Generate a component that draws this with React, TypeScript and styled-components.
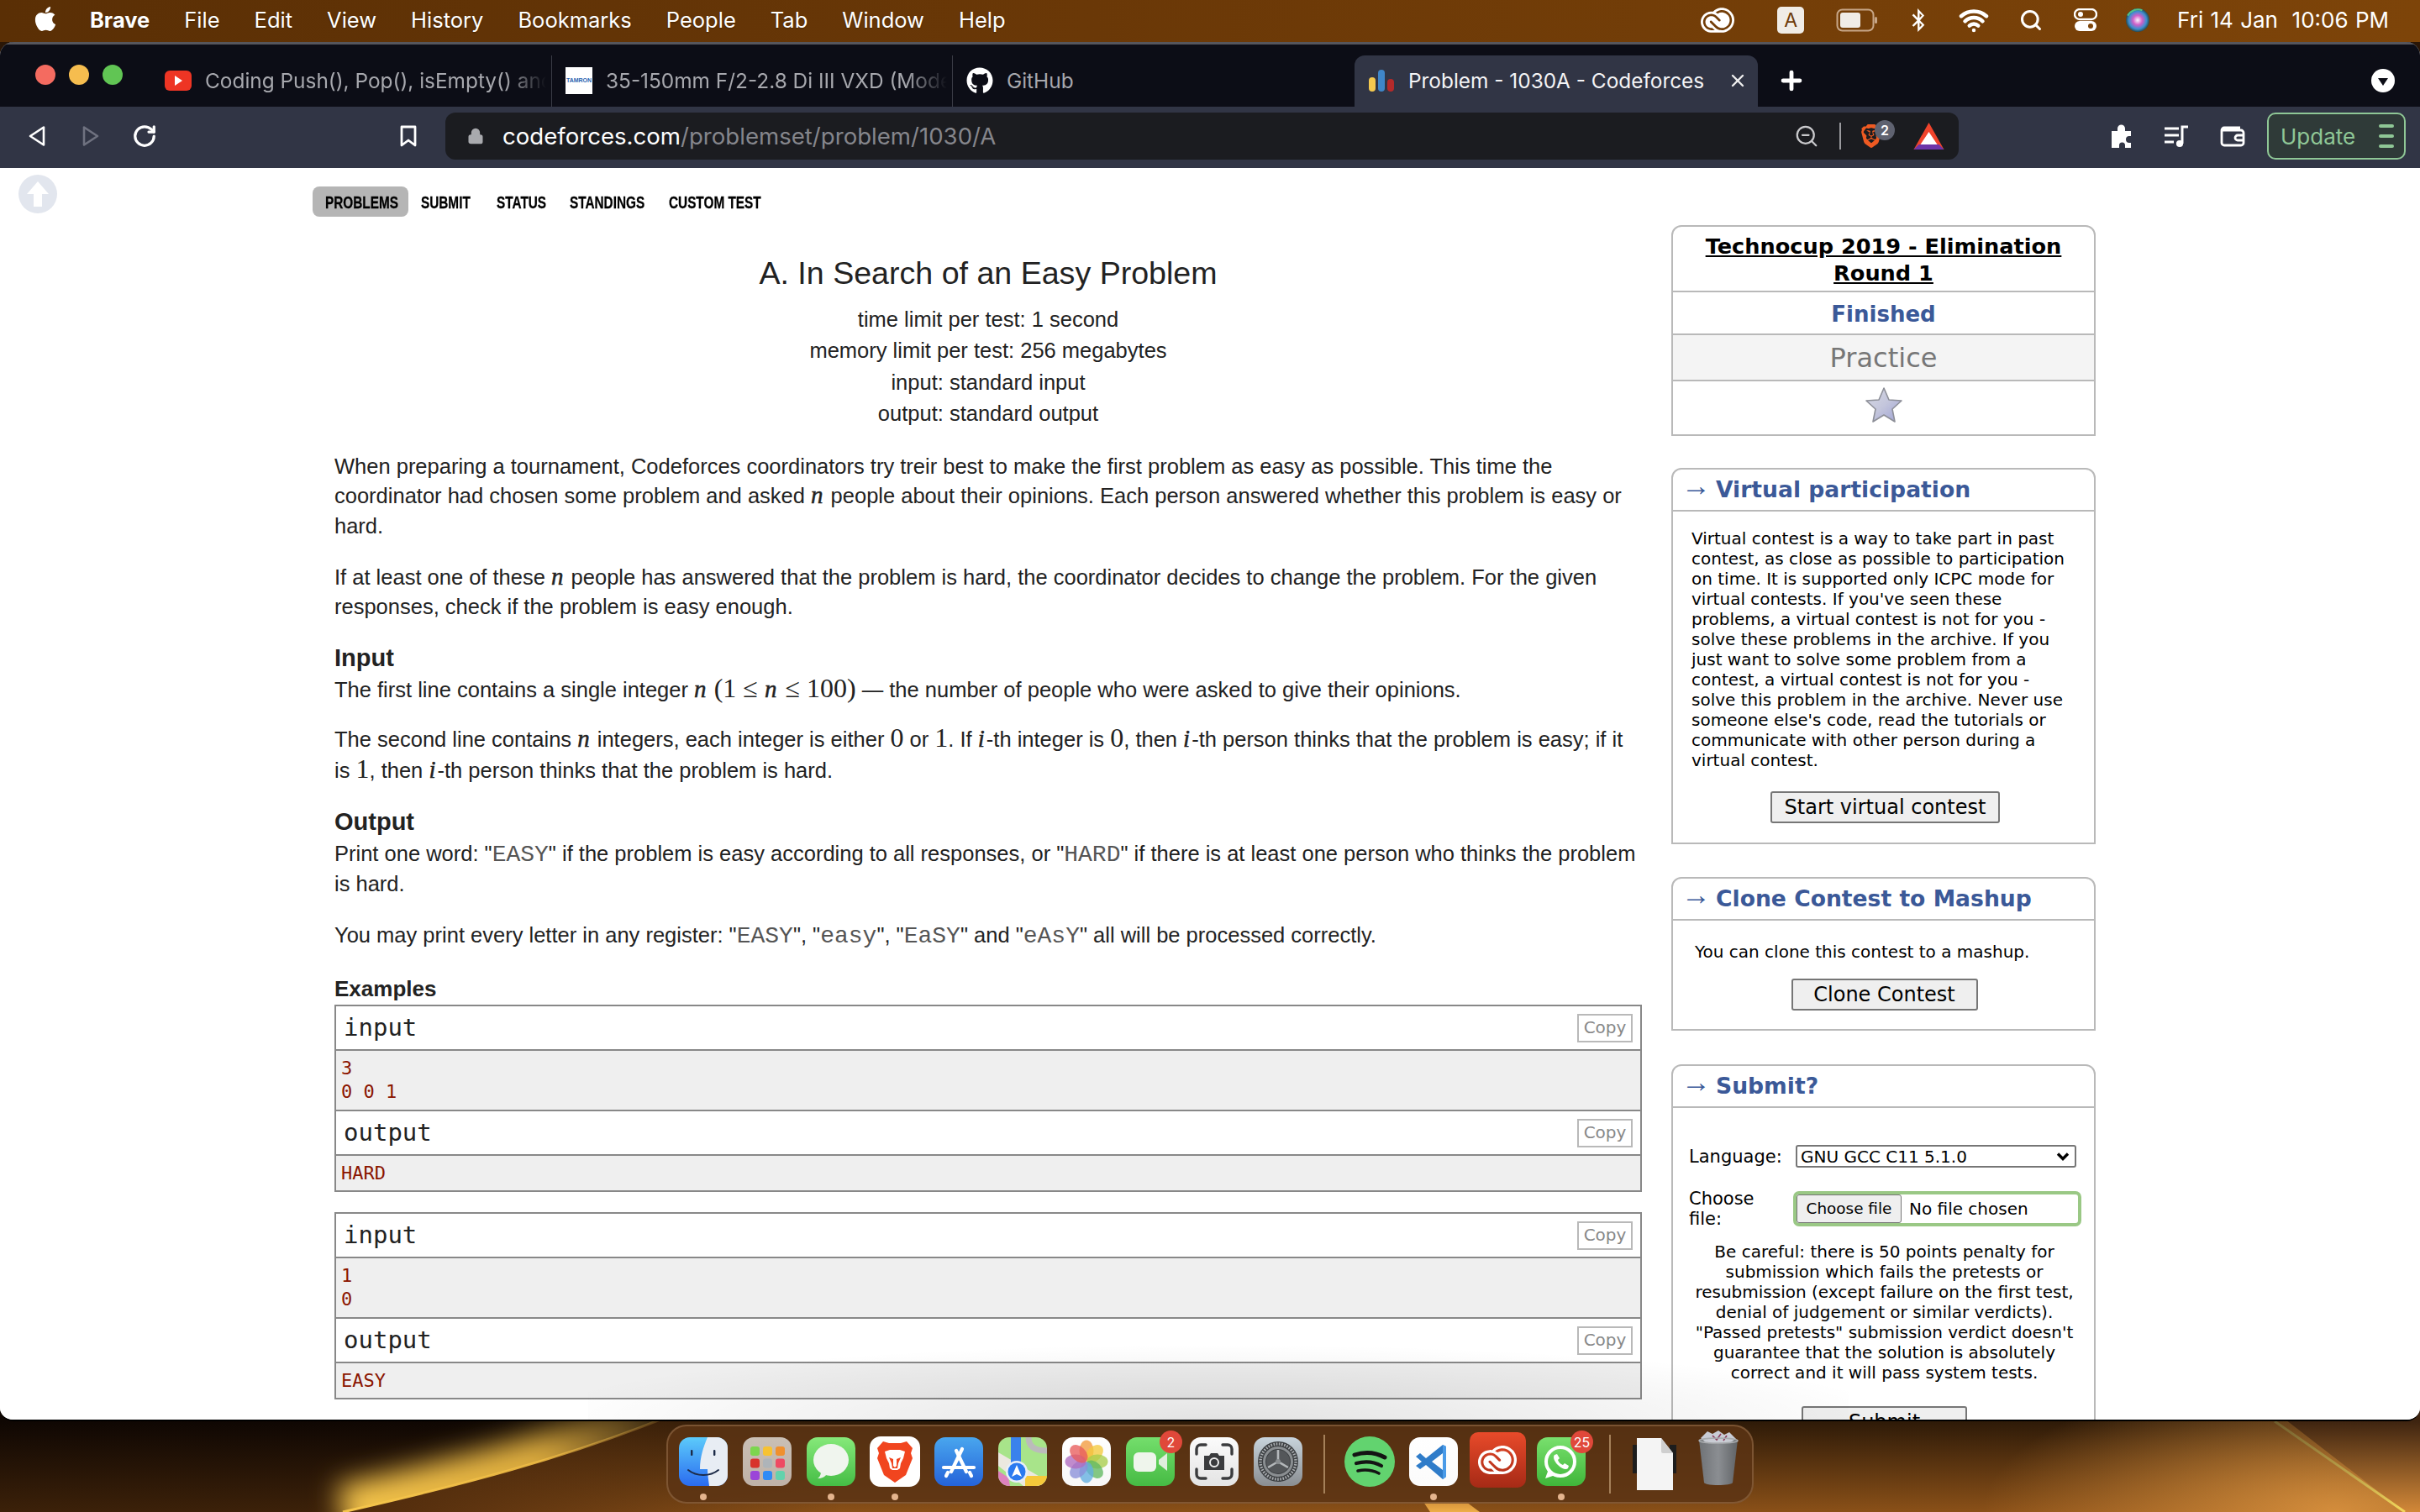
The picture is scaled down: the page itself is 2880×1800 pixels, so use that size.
import React from "react";
import styled, { createGlobalStyle } from "styled-components";
import { FaApple, FaGithub, FaBluetoothB } from "react-icons/fa";
import { SiBrave, SiAdobecreativecloud } from "react-icons/si";
import { Search, Wifi, Plus, X, RotateCw, ZoomOut, Lock } from "lucide-react";

const Global = createGlobalStyle`
  html, body { margin: 0; padding: 0; width: 2880px; height: 1800px; overflow: hidden; background: #3a2008; }
  * { box-sizing: border-box; }
`;

const Screen = styled.div`
  position: relative; width: 2880px; height: 1800px; overflow: hidden;
  display: flex; flex-direction: column; background: #2a1606;
  font-family: Inter, "Liberation Sans", sans-serif;
`;
const Wallpaper = styled.svg`
  position: absolute; left: 0; top: 0; width: 2880px; height: 1800px;
`;
const MenuBar = styled.div`
  position: relative; height: 50px; flex: none; display: flex; align-items: center;
  background: linear-gradient(90deg, #5a2f05 0%, #6a3807 45%, #7d4409 100%);
  color: #fff; font-size: 25.5px; padding: 0 37px 0 41px;
`;
const MenuApple = styled.span`
  display: flex; width: 28px; margin-right: 38px; margin-top: -6px; svg { width: 31px; height: 33px; margin-left: -2px; }
`;
const MenuItem = styled.span<{ $bold?: boolean }>`
  font-weight: ${(p) => (p.$bold ? 700 : 400)};
  margin-right: 41px; margin-top: -4px; white-space: nowrap;
  text-shadow: 0 1px 2px rgba(0, 0, 0, 0.3);
`;
const MenuRight = styled.div`
  margin-left: auto; display: flex; align-items: center; margin-top: -2px;
`;
const Status = styled.span<{ $ml?: number }>`
  display: flex; align-items: center; justify-content: center;
  margin-left: ${(p) => p.$ml ?? 0}px; color: #fff;
`;
const InputBadge = styled.span`
  width: 32px; height: 32px; border-radius: 5px; background: #f0ece6; color: #6e3a08;
  font-size: 23px; display: flex; align-items: center; justify-content: center;
`;
const Clock = styled.span`
  margin-left: 33px; font-size: 26px; white-space: nowrap; word-spacing: 1px; margin-top: -2px;
`;

const Window = styled.div`
  position: relative; height: 1642px; flex: none; display: flex; flex-direction: column;
  border-radius: 16px; overflow: hidden; background: #fff;
  border-bottom: 2px solid #000;
`;
const TabRow = styled.div`
  height: 77px; flex: none; display: flex; align-items: flex-end;
  background: #0c0d16; padding-left: 42px;
  border-top: 3px solid #56565c;
  position: relative;
`;
const Lights = styled.div`
  display: flex; gap: 16px; margin-bottom: 26px; width: 138px; flex: none;
`;
const Light = styled.span<{ $c: string }>`
  width: 24px; height: 24px; border-radius: 50%; background: ${(p) => p.$c};
`;
const Tab = styled.div<{ $active?: boolean; $w: number; $last?: boolean }>`
  width: ${(p) => p.$w}px; height: 61px; flex: none; display: flex; align-items: center;
  padding: 0 0 2px 16px; gap: 16px; position: relative; font-size: 24.4px;
  color: ${(p) => (p.$active ? "#f4f4f6" : "#a7a8ae")};
  background: ${(p) => (p.$active ? "#313545" : "transparent")};
  border-radius: ${(p) => (p.$active ? "12px 12px 0 0" : "0")};
  border-right: ${(p) => (p.$active || p.$last ? "none" : "1px solid #3a3c46")};
`;
const TabTitle = styled.span<{ $fade?: boolean }>`
  white-space: nowrap; overflow: hidden; flex: 1; min-width: 0;
  ${(p) => p.$fade && "-webkit-mask-image: linear-gradient(90deg, #000 88%, transparent 100%); margin-right: 6px;"}
`;
const FavRed = styled.span`
  width: 32px; height: 24px; border-radius: 6px; background: #ee3524; flex: none;
  display: flex; align-items: center; justify-content: center;
  &::after { content: ""; border-left: 9px solid #fff; border-top: 6px solid transparent; border-bottom: 6px solid transparent; }
`;
const FavTamron = styled.span`
  width: 32px; height: 32px; background: #fff; color: #2a62b0; font-size: 7px; font-weight: 700;
  display: flex; align-items: center; justify-content: center; flex: none;
  font-family: "Liberation Sans", sans-serif;
`;
const FavBars = styled.span`
  width: 32px; height: 26px; display: flex; align-items: flex-end; gap: 3px; flex: none;
  padding-left: 1px;
`;
const Bar = styled.i<{ $c: string; $h: number }>`
  width: 8px; height: ${(p) => p.$h}px; background: ${(p) => p.$c}; border-radius: 4px;
`;
const CloseX = styled.span`
  display: flex; margin-right: 12px; color: #eee;
`;
const NewTab = styled.span`
  width: 40px; height: 61px; display: flex; align-items: center; justify-content: center; color: #fff; flex: none;
  margin-left: 20px; padding-bottom: 2px;
`;
const TabMenu = styled.span`
  margin-left: auto; margin-right: 30px; width: 28px; height: 28px; border-radius: 50%; background: #fff;
  align-self: flex-end; margin-bottom: 17px; display: flex; align-items: center; justify-content: center;
  &::after { content: ""; border-top: 9px solid #0c0d16; border-left: 6px solid transparent; border-right: 6px solid transparent; margin-top: 3px; }
`;
const Toolbar = styled.div`
  height: 73px; flex: none; display: flex; align-items: center; background: #313545; padding: 0 17px 3px 30px;
`;
const Tool = styled.span<{ $ml?: number; $w: number; $dim?: boolean }>`
  width: ${(p) => p.$w}px; margin-left: ${(p) => p.$ml ?? 0}px; flex: none;
  display: flex; align-items: center; justify-content: center;
  color: ${(p) => (p.$dim ? "#6f7280" : "#fff")};
`;
const UrlBar = styled.div`
  width: 1801px; height: 56px; margin-left: 32px; border-radius: 12px; background: #1b1c20; flex: none;
  display: flex; align-items: center; padding: 0 17px 0 26px; font-size: 27.6px; color: #fff;
`;
const UrlPath = styled.span` color: #85868c; `;
const UrlLock = styled.span`
  display: flex; width: 42px; color: #a9aaae;
`;
const UrlRight = styled.div`
  margin-left: auto; display: flex; align-items: center; color: #c9c9cc;
`;
const UrlDivider = styled.span`
  width: 2px; height: 32px; background: #9a9a9e; margin: 0 22px 0 24px;
`;
const ShieldWrap = styled.span`
  position: relative; display: flex; width: 28px; color: #ee5a22; margin-right: 36px;
`;
const ShieldBadge = styled.span`
  position: absolute; left: 18px; top: -4px; width: 24px; height: 24px; border-radius: 50%; background: #5f6270; color: #fff;
  font-size: 16px; font-weight: 600; display: flex; align-items: center; justify-content: center;
`;
const UpdateBtn = styled.div`
  width: 165px; height: 56px; margin-left: 25px; border: 2px solid #8fc796; border-radius: 10px; flex: none;
  background: #2f3a38; color: #8fc796; font-size: 26px; display: flex; align-items: center; justify-content: space-between;
  padding: 0 12px 0 14px;
`;
const UpdateLines = styled.span`
  width: 18px; display: flex; flex-direction: column; gap: 8px;
  i { display: block; height: 4px; border-radius: 2px; background: #8fc796; }
`;

const Page = styled.div`
  position: relative; flex: 1; min-height: 0; overflow: hidden; background: #fff; color: #222;
  font-family: "Liberation Sans", Arial, sans-serif;
`;
const ToTop = styled.span`
  position: absolute; left: 22px; top: 8px; width: 46px; height: 46px; border-radius: 50%; background: #e2e6ee;
  display: flex; align-items: center; justify-content: center;
`;
const DockShade = styled.div`
  position: absolute; left: 700px; width: 1500px; bottom: 0; height: 90px; pointer-events: none;
  background: radial-gradient(ellipse 55% 100% at 50% 100%, rgba(0,0,0,.11), rgba(0,0,0,0) 100%);
`;
const Nav = styled.nav`
  display: flex; align-items: center; height: 36px; margin: 22px 0 0 372px;
  font-family: "Liberation Sans", sans-serif; font-weight: 700; font-size: 21px; color: #000;
  -webkit-text-stroke: 0.3px #000;
`;
const NavItem = styled.span<{ $active?: boolean; $w: number }>`
  width: ${(p) => p.$w}px; height: 36px; display: flex; align-items: center; padding: 2px 0 0 15px; white-space: nowrap;
  border-radius: ${(p) => (p.$active ? "8px" : "0")};
  background: ${(p) => (p.$active ? "#b5b5b5" : "transparent")};
`;
const NavLabel = styled.span`
  display: inline-block; transform: scaleX(0.73); transform-origin: left center;
`;
const Columns = styled.div`
  display: grid; grid-template-columns: 1556px 505px; column-gap: 35px; margin: 10px 0 0 398px; width: 2100px;
`;
const Main = styled.main`
  font-size: 25.5px; line-height: 35.7px; min-width: 0;
`;
const Title = styled.h1`
  margin: 32px 0 0; font-size: 37.6px; line-height: 50px; font-weight: 400; text-align: center; color: #222;
`;
const Limits = styled.div`
  margin-top: 12px; text-align: center; line-height: 37.4px;
`;
const Para = styled.p<{ $mt?: number }>`
  margin: ${(p) => p.$mt ?? 25}px 0 0;
`;
const SectionTitle = styled.h2<{ $mt?: number; $small?: boolean }>`
  margin: ${(p) => p.$mt ?? 24}px 0 0; font-size: ${(p) => (p.$small ? 26 : 29)}px; line-height: ${(p) => (p.$small ? 30 : 36)}px; font-weight: 700;
`;
const V = styled.span`
  font-family: "Liberation Serif", serif; font-style: italic; font-size: 29px; line-height: 1; margin-right: 2px;
  -webkit-text-stroke: 0.5px currentColor;
`;
const N = styled.span`
  font-family: "Liberation Serif", serif; font-size: 32px; line-height: 1;
`;
const Tt = styled.code`
  font-family: "Liberation Mono", monospace; font-size: 28px; line-height: 1; color: #555;
`;
const Sample = styled.section<{ $mt: number }>`
  border: 2px solid #888; margin-top: ${(p) => p.$mt}px; font-family: "DejaVu Sans Mono", monospace;
`;
const SampleHead = styled.div`
  height: 53px; display: flex; align-items: center; justify-content: space-between; padding: 0 9px 0 9px;
  font-size: 29px; color: #222; border-bottom: 2px solid #888;
`;
const Copy = styled.span`
  width: 66px; height: 34px; border: 2px solid #b9b9b9; color: #888; font-family: "DejaVu Sans", sans-serif; font-size: 20px;
  display: flex; align-items: center; justify-content: center;
`;
const SampleBody = styled.pre<{ $last?: boolean; $h: number }>`
  margin: 0; height: ${(p) => p.$h}px; padding: 7px 0 0 6px; background: #efefef; color: #8b1500; font-family: inherit;
  font-size: 22px; line-height: 28px; border-bottom: ${(p) => (p.$last ? "none" : "2px solid #888")};
`;

const Side = styled.aside`
  font-family: "DejaVu Sans", Verdana, sans-serif; color: #000; font-size: 20px; line-height: 24px;
`;
const Box = styled.section<{ $mt?: number }>`
  border: 2px solid #b9b9b9; border-radius: 12px 12px 0 0; margin-top: ${(p) => p.$mt ?? 0}px;
`;
const ContestName = styled.a`
  display: block; height: 78px; padding-top: 7px; text-align: center; font-size: 25.6px; line-height: 32px; font-weight: 700; color: #000;
  text-decoration: underline; border-bottom: 2px solid #b9b9b9;
`;
const Finished = styled.div`
  height: 51px; padding-top: 2px; display: flex; align-items: center; justify-content: center; color: #3b5998; font-weight: 700; font-size: 26px;
  border-bottom: 2px solid #b9b9b9;
`;
const Practice = styled.div`
  height: 55px; display: flex; align-items: center; justify-content: center; background: #f4f4f4; color: #777; font-size: 32px;
  border-bottom: 2px solid #b9b9b9;
`;
const StarRow = styled.div`
  height: 63px; display: flex; align-items: flex-start; justify-content: center; padding-top: 6px;
`;
const BoxHead = styled.h3`
  margin: 0; height: 50px; display: flex; align-items: center; color: #3b5998; font-size: 26.6px; font-weight: 700; padding-left: 15px;
  border-bottom: 2px solid #b9b9b9;
`;
const Arrow = styled.span`
  font-family: "Liberation Serif", serif; font-weight: 400; font-size: 35px; flex: none; margin: -9px 0 0 -5px; padding-right: 5px; box-sizing: content-box; width: 36px;
`;
const BoxBody = styled.div<{ $pt: number; $pb: number; $pl?: number }>`
  padding: ${(p) => p.$pt}px 20px ${(p) => p.$pb}px ${(p) => p.$pl ?? 22}px;
`;
const NormalBtn = styled.button<{ $w: number; $mt: number; $left: number }>`
  display: block; width: ${(p) => p.$w}px; height: 38px; margin: ${(p) => p.$mt}px auto 0; position: relative; left: ${(p) => p.$left}px; border: 2px solid #767676; border-radius: 3px;
  background: #efefef; color: #000; font: 24px "DejaVu Sans", sans-serif; padding: 0;
`;
const FormRow = styled.div<{ $mt?: number }>`
  display: grid; grid-template-columns: 125px 1fr; align-items: center; margin: ${(p) => p.$mt ?? 0}px 0 0 -3px; font-size: 21px;
`;
const LangSelect = styled.div`
  width: 334px; height: 27px; border: 2px solid #767676; border-radius: 3px; background: #fff; font-size: 20px; padding: 0 6px 0 4px; margin-left: 2px;
  display: flex; align-items: center; justify-content: space-between; color: #000;
`;
const FileBox = styled.div`
  width: 343px; height: 42px; margin-left: -1px; border: 4px solid #9ac885; border-radius: 7px; display: flex; align-items: center;
`;
const FileBtn = styled.span`
  width: 125px; height: 34px; border: 1.5px solid #767676; border-radius: 3px; background: #efefef; font-size: 18.4px; display: flex; align-items: center; justify-content: center; flex: none;
`;
const FileName = styled.span` margin-left: 9px; font-size: 20px; `;
const Warn = styled.p`
  margin: 15px -6px 0 -6px; text-align: center; padding: 0;
`;
const SubmitBtn = styled.button`
  display: block; width: 197px; height: 38px; margin: 28px auto 0; position: relative; left: 0; border: 2px solid #767676; border-radius: 3px; background: #efefef; font: 24px "DejaVu Sans", sans-serif; color: #000; padding: 0;
`;

const Dock = styled.div`
  position: absolute; left: 793px; top: 1696px; width: 1294px; height: 94px; display: flex; align-items: flex-start;
  padding: 13px 0 0 4px; border-radius: 24px; border: 2px solid rgba(190, 150, 110, 0.35);
  background: rgba(92, 52, 20, 0.85);
`;
const Slot = styled.div`
  width: 76px; flex: none; display: flex; flex-direction: column; align-items: center;
`;
const IconHolder = styled.div`
  position: relative; width: 58px; height: 58px; display: flex; align-items: center; justify-content: center;
  > svg { display: block; flex: none; }
`;
const Dot = styled.span<{ $on?: boolean }>`
  width: 8px; height: 8px; border-radius: 50%; margin-top: 9px; background: ${(p) => (p.$on ? "#e4b48e" : "transparent")};
`;
const Badge = styled.span`
  position: absolute; right: -9px; top: -8px; width: 27px; height: 27px; border-radius: 50%; background: #e0483a; color: #fff;
  font-size: 16px; display: flex; align-items: center; justify-content: center;
`;
const DockSep = styled.span<{ $ml: number; $mr: number }>`
  width: 2px; height: 70px; margin: -3px ${(p) => p.$mr}px 0 ${(p) => p.$ml}px; background: #a5815a; flex: none;
`;
const CcTile = styled.span`
  flex: none; width: 67px; height: 66px; margin-top: -4px; border-radius: 10px; color: #fff;
  background: linear-gradient(180deg, #e84a2a, #a62a16);
  display: flex; align-items: center; justify-content: center;
`;

const Sq: React.FC<{ id: string; a: string; b: string; children?: React.ReactNode }> = ({ id, a, b, children }) => (
  <svg width="58" height="58" viewBox="0 0 58 58">
    <defs>
      <linearGradient id={id} x1="0" y1="0" x2="0" y2="1">
        <stop offset="0" stopColor={a} />
        <stop offset="1" stopColor={b} />
      </linearGradient>
    </defs>
    <rect width="58" height="58" rx="13" fill={`url(#${id})`} />
    {children}
  </svg>
);

const Finder = () => (
  <Sq id="fi" a="#5ccbfb" b="#2a6bf0">
    <path d="M34 0H45a13 13 0 0 1 13 13V45a13 13 0 0 1-13 13H36c-1-8-2-14-2-20H25c0-14 4-26 9-38z" fill="#e8edf4" />
    <rect x="14" y="15" width="2.4" height="7" rx="1" fill="#1d2b48" />
    <rect x="41" y="15" width="2.4" height="7" rx="1" fill="#1d2b48" />
    <path d="M11 39c10 8 26 8 36 0" stroke="#1d2b48" strokeWidth="2" fill="none" strokeLinecap="round" />
  </Sq>
);
const Launchpad = () => {
  const cs = ["#7cd64f", "#f7c232", "#f0902e", "#d8332c", "#aeb4b9", "#ee4a63", "#9b45d8", "#2f8bf5", "#63d2ac"];
  return (
    <Sq id="lp" a="#c9bfb5" b="#bfb2a8">
      {cs.map((c, i) => (
        <rect key={c} x={9 + (i % 3) * 15} y={11 + Math.floor(i / 3) * 14.5} width="11" height="11" rx="3" fill={c} />
      ))}
    </Sq>
  );
};
const Messages = () => (
  <Sq id="ms" a="#86e97a" b="#45bd45">
    <ellipse cx="29" cy="27" rx="21" ry="19" fill="#f0f5ee" />
    <path d="M17 41c0 4-2 7-4 8 5 0 9-2 11-5z" fill="#eef4ec" />
  </Sq>
);
const BraveIcon = () => (
  <svg width="60" height="60" viewBox="0 0 60 60">
    <rect width="60" height="60" rx="13" fill="#fff" />
    <path d="M16 6l7 2h14l7-2 7 8-2 6 2 6-8 20-13 9-13-9-8-20 2-6-2-6z" fill="#f1451f" />
    <path d="M18 18l6-2h12l6 2-2 8-3 6-1 6-6 4-6-4-1-6-3-6z" fill="#fff" />
    <path d="M23 25l5 2v8l2 2 2-2v-8l5-2-3 7-1 6h-6l-1-6z" fill="#f1451f" />
    <path d="M26 40h8l-4 4z" fill="#f1451f" />
  </svg>
);
const AppStore = () => (
  <Sq id="as" a="#49a6ee" b="#2563d9">
    <g stroke="#fff" strokeWidth="4.2" strokeLinecap="round">
      <path d="M20 41L33 14" />
      <path d="M38 41L26 16" />
      <path d="M11 36h36" />
      <path d="M16 42l-2 4" />
      <path d="M42 42l2 4" />
    </g>
  </Sq>
);
const Maps = () => (
  <svg width="58" height="58" viewBox="0 0 58 58">
    <clipPath id="mc"><rect width="58" height="58" rx="13" /></clipPath>
    <g clipPath="url(#mc)">
      <rect width="58" height="58" fill="#a8e48a" />
      <path d="M0 18L58 52V58H30L0 34z" fill="#ece8df" />
      <path d="M0 40V58H14L12 48z" fill="#dd82be" />
      <path d="M32 58V46H58V58z" fill="#f6c93a" />
      <rect x="15" y="0" width="12" height="36" fill="#3a82ec" />
      <path d="M36 0c0 10 6 16 22 16" stroke="#bbb" strokeWidth="7" fill="none" />
      <circle cx="22" cy="41" r="13" fill="#e8eef8" />
      <circle cx="22" cy="41" r="10.5" fill="#2b7af0" />
      <path d="M22 33l6 14-6-3-6 3z" fill="#fff" />
    </g>
  </svg>
);
const Photos = () => {
  const cs = ["#f29a3e", "#f3c93e", "#a9cd4b", "#62b862", "#62aee0", "#8b8fd8", "#b06bc0", "#e85c5c"];
  return (
    <Sq id="ph" a="#ffffff" b="#f7f7f7">
      {cs.map((c, i) => (
        <ellipse key={c} cx="29" cy="16" rx="8.5" ry="12.5" fill={c} opacity="0.78" transform={`rotate(${i * 45} 29 29)`} />
      ))}
    </Sq>
  );
};
const FaceTime = () => (
  <Sq id="ft" a="#74de6c" b="#46bb44">
    <rect x="9" y="18" width="27" height="23" rx="6" fill="#eff5ec" />
    <path d="M39 27l10-8v21l-10-8z" fill="#e0eedd" />
  </Sq>
);
const Screenshot = () => (
  <Sq id="ss" a="#fbfbfb" b="#e4e4e4">
    <g stroke="#3b3c3e" strokeWidth="3.4" fill="none" strokeLinecap="round">
      <path d="M8 20v-6a5 5 0 0 1 5-5h6" />
      <path d="M50 20v-6a5 5 0 0 0-5-5h-6" />
      <path d="M8 38v6a5 5 0 0 0 5 5h6" />
      <path d="M50 38v6a5 5 0 0 1-5 5h-6" />
    </g>
    <path d="M17 22h6l2-3h8l2 3h6v17H17z" fill="#3b3c3e" />
    <circle cx="29" cy="30" r="5" fill="none" stroke="#eee" strokeWidth="2" />
  </Sq>
);
const Settings = () => (
  <Sq id="st" a="#c8d4dc" b="#8a8e92">
    <circle cx="29" cy="29" r="24" fill="#3c3f42" />
    <circle cx="29" cy="29" r="21" fill="none" stroke="#a8acaf" strokeWidth="3.4" strokeDasharray="1.6 1.6" />
    <circle cx="29" cy="29" r="16.5" fill="none" stroke="#8a8e91" strokeWidth="3" />
    <circle cx="29" cy="29" r="14" fill="#54575a" />
    <g stroke="#b4b8bb" strokeWidth="2.6">
      <path d="M29 29V15" />
      <path d="M29 29L17 36" />
      <path d="M29 29L41 36" />
    </g>
    <circle cx="29" cy="29" r="3" fill="#8a8e91" />
  </Sq>
);
const Spotify = () => (
  <svg width="60" height="60" viewBox="0 0 60 60">
    <circle cx="30" cy="30" r="30" fill="#62d36f" />
    <g stroke="#141414" fill="none" strokeLinecap="round">
      <path d="M12 22c12-4 25-3 36 3" strokeWidth="5" />
      <path d="M14 32c11-3 21-2 30 3" strokeWidth="4.2" />
      <path d="M16 41c9-2 17-1 25 3" strokeWidth="3.6" />
    </g>
  </svg>
);
const VSCode = () => (
  <Sq id="vs" a="#fff" b="#fbfbfb">
    <path d="M40 9L44 11 V47 L40 50 L20 33 L13 38 L8 34 L15 29 L8 23 L13 19 L20 25z M40 19L27 29l13 10z" fill="#2f7cc9" fillRule="evenodd" />
    <path d="M40 9L44 11V47L40 50z" fill="#4a9be8" />
  </Sq>
);
const CreativeCloud = () => (
  <CcTile><SiAdobecreativecloud size={46} /></CcTile>
);
const WhatsApp = () => (
  <Sq id="wa" a="#79e06e" b="#40b63a">
    <circle cx="28" cy="29" r="17" fill="none" stroke="#fff" strokeWidth="4" />
    <path d="M14 38l-4 11 12-4z" fill="#fff" />
    <path d="M21 21c-2 2-1 7 4 12s10 6 12 4l1-3-5-3-2 2c-3-1-5-3-6-6l2-2-3-5z" fill="#fff" />
  </Sq>
);
const Doc = () => (
  <svg width="52" height="62" viewBox="0 0 52 62" style={{ marginTop: 6 }}>
    <rect x="0" y="8" width="6" height="34" fill="#1d1d1d" />
    <rect x="44" y="8" width="8" height="34" fill="#1d1d1d" />
    <path d="M5 0H34L48 18V62H5z" fill="#f4f4f4" />
    <path d="M34 0L48 18H36a2 2 0 0 1-2-2z" fill="#cfcfcf" />
  </svg>
);
const Trash = () => (
  <svg width="52" height="68" viewBox="0 0 52 68" style={{ marginTop: -7 }}>
    <defs>
      <linearGradient id="tr" x1="0" y1="0" x2="1" y2="0">
        <stop offset="0" stopColor="#6f7276" />
        <stop offset="0.5" stopColor="#8b8e92" />
        <stop offset="1" stopColor="#606366" />
      </linearGradient>
    </defs>
    <path d="M3 11L9 62c1 4 33 4 34 0l6-51z" fill="url(#tr)" />
    <path d="M5 9l8-8 6 3 7-4 7 5 6-3 8 8-8 5H12z" fill="#c9ccd4" />
    <path d="M19 6l5 5 5-7M36 6l-4 6" stroke="#8a3a5a" strokeWidth="1.6" fill="none" />
    <ellipse cx="26" cy="12" rx="23" ry="3" fill="none" stroke="#a9acaf" strokeWidth="1.6" />
  </svg>
);

const BackIcon: React.FC<{ flip?: boolean }> = ({ flip }) => (
  <svg width="22" height="26" viewBox="0 0 22 26" style={flip ? { transform: "scaleX(-1)" } : undefined}>
    <path d="M19 2.5v21L3 13z" fill="none" stroke="currentColor" strokeWidth="2.6" strokeLinejoin="round" />
  </svg>
);
const Bookmark = () => (
  <svg width="22" height="26" viewBox="0 0 22 26">
    <path d="M3 2h16v22l-8-6-8 6z" fill="none" stroke="currentColor" strokeWidth="2.8" strokeLinejoin="round" />
  </svg>
);
const Triangle = () => (
  <svg width="37" height="32" viewBox="0 0 36 32">
    <path d="M18 0L36 32H0z" fill="#f0442c" />
    <path d="M6 26L0 32H36L30 26z" fill="#6d35a8" />
    <path d="M18 11L28 26H8z" fill="#fff" />
  </svg>
);
const Puzzle = () => (
  <svg width="30" height="30" viewBox="0 0 30 30">
    <path d="M2 9h7V6a4.5 4.5 0 0 1 9 0v3h7v6h-2a4 4 0 0 0 0 8h2v6H18v-3a3.5 3.5 0 0 0-7 0v3H2z" fill="currentColor" />
  </svg>
);
const Playlist = () => (
  <svg width="30" height="28" viewBox="0 0 30 28" fill="none" stroke="currentColor" strokeWidth="3">
    <path d="M1 5h17M1 13h17M1 21h11" />
    <path d="M22 23V3h7" />
    <circle cx="19" cy="23" r="2.6" fill="currentColor" />
  </svg>
);
const Wallet = () => (
  <svg width="30" height="28" viewBox="0 0 30 28" fill="none" stroke="currentColor" strokeWidth="2.8">
    <path d="M24 4H5a3 3 0 0 0-3 3v15a3 3 0 0 0 3 3h20a3 3 0 0 0 3-3V10a3 3 0 0 0-3-3H3" />
    <path d="M28 13h-7a3 3 0 0 0 0 6h7" />
  </svg>
);
const Battery = () => (
  <svg width="50" height="28" viewBox="0 0 50 28">
    <rect x="1.5" y="1.5" width="43" height="25" rx="6" fill="none" stroke="#c7a687" strokeWidth="2" />
    <rect x="5" y="5" width="24" height="18" rx="3" fill="#f0ece6" />
    <rect x="46" y="10" width="3" height="8" rx="1.5" fill="#c7a687" />
  </svg>
);
const Control = () => (
  <svg width="28" height="28" viewBox="0 0 28 28">
    <rect x="1" y="1" width="26" height="12" rx="6" fill="none" stroke="#fff" strokeWidth="2.4" />
    <circle cx="8" cy="7" r="3" fill="#fff" />
    <rect x="1" y="15" width="26" height="12" rx="6" fill="#fff" />
    <circle cx="20" cy="21" r="3" fill="#7d4409" />
  </svg>
);
const Siri = () => (
  <svg width="28" height="28" viewBox="0 0 26 26">
    <defs>
      <radialGradient id="si">
        <stop offset="0" stopColor="#f8f4ff" />
        <stop offset="0.4" stopColor="#d060c8" />
        <stop offset="0.75" stopColor="#3a8fd0" />
        <stop offset="1" stopColor="#2a4a50" />
      </radialGradient>
    </defs>
    <circle cx="13" cy="13" r="13" fill="url(#si)" />
    <path d="M2 8a13 13 0 0 1 16-6" stroke="#52c08a" strokeWidth="2" fill="none" />
  </svg>
);
const Star = () => (
  <svg width="44" height="44" viewBox="0 0 44 44">
    <defs>
      <linearGradient id="sg" x1="0" y1="0" x2="1" y2="1">
        <stop offset="0" stopColor="#d8dae4" />
        <stop offset="0.5" stopColor="#c4c6dc" />
        <stop offset="1" stopColor="#9ea2d4" />
      </linearGradient>
    </defs>
    <path d="M22 2l6 14 15 1-11 10 3 15-13-8-13 8 3-15L1 17l15-1z" fill="url(#sg)" stroke="#8d8f98" strokeWidth="1.6" strokeLinejoin="round" />
  </svg>
);
const Chevron = () => (
  <svg width="16" height="12" viewBox="0 0 16 12">
    <path d="M2 2.5l6 6 6-6" stroke="#000" strokeWidth="3.4" fill="none" />
  </svg>
);

const dockItems: { key: string; el: React.ReactNode; on?: boolean; badge?: string }[] = [
  { key: "finder", el: <Finder />, on: true },
  { key: "launch", el: <Launchpad /> },
  { key: "msg", el: <Messages />, on: true },
  { key: "brave", el: <BraveIcon />, on: true },
  { key: "app", el: <AppStore /> },
  { key: "maps", el: <Maps /> },
  { key: "photos", el: <Photos /> },
  { key: "ft", el: <FaceTime />, badge: "2" },
  { key: "shot", el: <Screenshot /> },
  { key: "set", el: <Settings /> },
];
const dockItems2: typeof dockItems = [
  { key: "spot", el: <Spotify /> },
  { key: "vs", el: <VSCode />, on: true },
  { key: "cc", el: <CreativeCloud /> },
  { key: "wa", el: <WhatsApp />, on: true, badge: "25" },
];
const dockItems3: typeof dockItems = [
  { key: "doc", el: <Doc /> },
  { key: "trash", el: <Trash /> },
];

const DockIcons: React.FC<{ items: typeof dockItems }> = ({ items }) => (
  <>
    {items.map((d) => (
      <Slot key={d.key}>
        <IconHolder>
          {d.el}
          {d.badge && <Badge>{d.badge}</Badge>}
        </IconHolder>
        <Dot $on={d.on} />
      </Slot>
    ))}
  </>
);

const SampleTest: React.FC<{ mt: number; input: string; output: string; inH: number; outH: number }> = ({ mt, input, output, inH, outH }) => (
  <Sample $mt={mt}>
    <SampleHead>input<Copy>Copy</Copy></SampleHead>
    <SampleBody $h={inH}>{input}</SampleBody>
    <SampleHead>output<Copy>Copy</Copy></SampleHead>
    <SampleBody $h={outH} $last>{output}</SampleBody>
  </Sample>
);

export default function App() {
  return (
    <Screen>
      <Global />
      <Wallpaper viewBox="0 0 2880 1800">
        <defs>
          <linearGradient id="wpL" x1="0" y1="1692" x2="0" y2="1800" gradientUnits="userSpaceOnUse">
            <stop offset="0" stopColor="#0f0703" />
            <stop offset="1" stopColor="#3c2109" />
          </linearGradient>
          <linearGradient id="wpGold" x1="408" y1="1800" x2="800" y2="1692" gradientUnits="userSpaceOnUse">
            <stop offset="0" stopColor="#f6c64c" stopOpacity="1" />
            <stop offset="0.6" stopColor="#f0bc44" stopOpacity="0.9" />
            <stop offset="1" stopColor="#c89a40" stopOpacity="0.15" />
          </linearGradient>
          <linearGradient id="wpBtm" x1="0" y1="1692" x2="0" y2="1800" gradientUnits="userSpaceOnUse">
            <stop offset="0" stopColor="#2e1a08" />
            <stop offset="1" stopColor="#8a5018" />
          </linearGradient>
          <linearGradient id="wpLeftBrown" x1="400" y1="0" x2="1000" y2="0" gradientUnits="userSpaceOnUse">
            <stop offset="0" stopColor="#4e2a0c" />
            <stop offset="1" stopColor="#4e2a0c" stopOpacity="0" />
          </linearGradient>
          <linearGradient id="wpR" x1="0" y1="1692" x2="0" y2="1800" gradientUnits="userSpaceOnUse">
            <stop offset="0" stopColor="#3e2410" />
            <stop offset="1" stopColor="#d28838" />
          </linearGradient>
          <linearGradient id="wpRay" x1="2707" y1="1692" x2="2862" y2="1800" gradientUnits="userSpaceOnUse">
            <stop offset="0" stopColor="#7a7a40" stopOpacity="0.5" />
            <stop offset="1" stopColor="#f4d85c" />
          </linearGradient>
          <radialGradient id="wpGlow" cx="2780" cy="1800" r="420" gradientUnits="userSpaceOnUse" gradientTransform="translate(0 1800) scale(1 0.4) translate(0 -1800)">
            <stop offset="0" stopColor="#dc9440" stopOpacity="0.9" />
            <stop offset="1" stopColor="#dc9440" stopOpacity="0" />
          </radialGradient>
          <linearGradient id="wpWedge" x1="0" y1="1790" x2="0" y2="1800" gradientUnits="userSpaceOnUse">
            <stop offset="0" stopColor="#d8963c" />
            <stop offset="1" stopColor="#eeae48" />
          </linearGradient>
          <filter id="wpBlur" x="-20%" y="-100%" width="140%" height="300%">
            <feGaussianBlur stdDeviation="16" />
          </filter>
        </defs>
        <rect y="1680" width="2880" height="120" fill="url(#wpL)" />
        <path d="M408 1800C540 1770 680 1735 810 1680" stroke="url(#wpGold)" strokeWidth="64" fill="none" filter="url(#wpBlur)" />
        <path d="M408 1800C540 1770 680 1735 810 1680L2880 1680V1800z" fill="url(#wpBtm)" />
        <path d="M408 1800C540 1770 680 1735 810 1680L1000 1680V1800z" fill="url(#wpLeftBrown)" />
        <path d="M408 1800C540 1770 680 1735 810 1680" stroke="url(#wpGold)" strokeWidth="3" fill="none" />
        <rect x="2300" y="1680" width="580" height="120" fill="url(#wpGlow)" />
        <path d="M2707 1680L2880 1680V1800H2862z" fill="url(#wpR)" />
        <path d="M2707 1692L2862 1800" stroke="url(#wpRay)" strokeWidth="3" />
        <path d="M1694 1788L1745 1788L1761 1800H1702z" fill="url(#wpWedge)" />
      </Wallpaper>
      <MenuBar>
        <MenuApple><FaApple /></MenuApple>
        <MenuItem $bold>Brave</MenuItem>
        <MenuItem>File</MenuItem>
        <MenuItem>Edit</MenuItem>
        <MenuItem>View</MenuItem>
        <MenuItem>History</MenuItem>
        <MenuItem>Bookmarks</MenuItem>
        <MenuItem>People</MenuItem>
        <MenuItem>Tab</MenuItem>
        <MenuItem>Window</MenuItem>
        <MenuItem>Help</MenuItem>
        <MenuRight>
          <Status><SiAdobecreativecloud size={40} /></Status>
          <Status $ml={51}><InputBadge>A</InputBadge></Status>
          <Status $ml={38}><Battery /></Status>
          <Status $ml={34}><FaBluetoothB size={28} /></Status>
          <Status $ml={34}><Wifi size={36} strokeWidth={3} /></Status>
          <Status $ml={36}><Search size={28} strokeWidth={2.6} /></Status>
          <Status $ml={37}><Control /></Status>
          <Status $ml={34}><Siri /></Status>
          <Clock>Fri 14 Jan&nbsp; 10:06 PM</Clock>
        </MenuRight>
      </MenuBar>
      <Window>
        <TabRow>
          <Lights>
            <Light $c="#f46b60" />
            <Light $c="#f6bd4f" />
            <Light $c="#61c554" />
          </Lights>
          <Tab $w={477}>
            <FavRed />
            <TabTitle $fade>Coding Push(), Pop(), isEmpty() and top()</TabTitle>
          </Tab>
          <Tab $w={477}>
            <FavTamron>TAMRON</FavTamron>
            <TabTitle $fade>35-150mm F/2-2.8 Di III VXD (Model A058)</TabTitle>
          </Tab>
          <Tab $w={478} $last>
            <FaGithub size={32} color="#fff" />
            <TabTitle>GitHub</TabTitle>
          </Tab>
          <Tab $w={480} $active>
            <FavBars>
              <Bar $c="#f4c94f" $h={17} />
              <Bar $c="#3f86c8" $h={26} />
              <Bar $c="#b42a2a" $h={15} />
            </FavBars>
            <TabTitle>Problem - 1030A - Codeforces</TabTitle>
            <CloseX><X size={24} strokeWidth={2.4} /></CloseX>
          </Tab>
          <NewTab><Plus size={34} strokeWidth={3.4} /></NewTab>
          <TabMenu />
        </TabRow>
        <Toolbar>
          <Tool $w={28}><BackIcon /></Tool>
          <Tool $w={28} $ml={36} $dim><BackIcon flip /></Tool>
          <Tool $w={30} $ml={35}><RotateCw size={30} strokeWidth={2.6} /></Tool>
          <Tool $w={24} $ml={287}><Bookmark /></Tool>
          <UrlBar>
            <UrlLock><Lock size={20} fill="currentColor" strokeWidth={2.4} /></UrlLock>
            codeforces.com<UrlPath>/problemset/problem/1030/A</UrlPath>
            <UrlRight>
              <ZoomOut size={30} strokeWidth={1.8} />
              <UrlDivider />
              <ShieldWrap>
                <SiBrave size={30} />
                <ShieldBadge>2</ShieldBadge>
              </ShieldWrap>
              <Triangle />
            </UrlRight>
          </UrlBar>
          <Tool $w={32} $ml={179}><Puzzle /></Tool>
          <Tool $w={32} $ml={32}><Playlist /></Tool>
          <Tool $w={32} $ml={35}><Wallet /></Tool>
          <UpdateBtn>
            Update
            <UpdateLines><i /><i /><i /></UpdateLines>
          </UpdateBtn>
        </Toolbar>
        <Page>
          <ToTop>
            <svg width="26" height="30" viewBox="0 0 26 30"><path d="M13 0L26 15H18V30H8V15H0z" fill="#fff" /></svg>
          </ToTop>
          <Nav>
            <NavItem $active $w={114}><NavLabel>PROBLEMS</NavLabel></NavItem>
            <NavItem $w={90}><NavLabel>SUBMIT</NavLabel></NavItem>
            <NavItem $w={87}><NavLabel>STATUS</NavLabel></NavItem>
            <NavItem $w={118}><NavLabel>STANDINGS</NavLabel></NavItem>
            <NavItem $w={140}><NavLabel>CUSTOM TEST</NavLabel></NavItem>
          </Nav>
          <Columns>
            <Main>
              <Title>A. In Search of an Easy Problem</Title>
              <Limits>
                <div>time limit per test: 1 second</div>
                <div>memory limit per test: 256 megabytes</div>
                <div>input: standard input</div>
                <div>output: standard output</div>
              </Limits>
              <Para $mt={26}>
                When preparing a tournament, Codeforces coordinators try treir best to make the first problem as easy as possible. This time the coordinator had chosen some problem and asked <V>n</V> people about their opinions. Each person answered whether this problem is easy or hard.
              </Para>
              <Para>
                If at least one of these <V>n</V> people has answered that the problem is hard, the coordinator decides to change the problem. For the given responses, check if the problem is easy enough.
              </Para>
              <SectionTitle>Input</SectionTitle>
              <Para $mt={2}>
                The first line contains a single integer <V>n</V> <N>(1 ≤ </N><V>n</V><N> ≤ 100)</N> — the number of people who were asked to give their opinions.
              </Para>
              <Para $mt={22}>
                The second line contains <V>n</V> integers, each integer is either <N>0</N> or <N>1</N>. If <V>i</V>-th integer is <N>0</N>, then <V>i</V>-th person thinks that the problem is easy; if it is <N>1</N>, then <V>i</V>-th person thinks that the problem is hard.
              </Para>
              <SectionTitle $mt={25}>Output</SectionTitle>
              <Para $mt={3}>
                Print one word: "<Tt>EASY</Tt>" if the problem is easy according to all responses, or "<Tt>HARD</Tt>" if there is at least one person who thinks the problem is hard.
              </Para>
              <Para $mt={25}>
                You may print every letter in any register: "<Tt>EASY</Tt>", "<Tt>easy</Tt>", "<Tt>EaSY</Tt>" and "<Tt>eAsY</Tt>" all will be processed correctly.
              </Para>
              <SectionTitle $small $mt={31}>Examples</SectionTitle>
              <SampleTest mt={4} input={"3\n0 0 1"} output="HARD" inH={72} outH={41} />
              <SampleTest mt={24} input={"1\n0"} output="EASY" inH={72} outH={41} />
            </Main>
            <Side>
              <Box>
                <ContestName>Technocup 2019 - Elimination<br />Round 1</ContestName>
                <Finished>Finished</Finished>
                <Practice>Practice</Practice>
                <StarRow><Star /></StarRow>
              </Box>
              <Box $mt={38}>
                <BoxHead><Arrow>→</Arrow>Virtual participation</BoxHead>
                <BoxBody $pt={20} $pb={23}>
                  Virtual contest is a way to take part in past contest, as close as possible to participation on time. It is supported only ICPC mode for virtual contests. If you've seen these problems, a virtual contest is not for you - solve these problems in the archive. If you just want to solve some problem from a contest, a virtual contest is not for you - solve this problem in the archive. Never use someone else's code, read the tutorials or communicate with other person during a virtual contest.
                  <NormalBtn $w={273} $mt={25} $left={1}>Start virtual contest</NormalBtn>
                </BoxBody>
              </Box>
              <Box $mt={39}>
                <BoxHead><Arrow>→</Arrow>Clone Contest to Mashup</BoxHead>
                <BoxBody $pt={25} $pb={22} $pl={26}>
                  You can clone this contest to a mashup.
                  <NormalBtn $w={222} $mt={20} $left={-2}>Clone Contest</NormalBtn>
                </BoxBody>
              </Box>
              <Box $mt={40}>
                <BoxHead><Arrow>→</Arrow>Submit?</BoxHead>
                <BoxBody $pt={44} $pb={0}>
                  <FormRow>
                    <span>Language:</span>
                    <LangSelect>GNU GCC C11 5.1.0<Chevron /></LangSelect>
                  </FormRow>
                  <FormRow $mt={25}>
                    <span>Choose<br />file:</span>
                    <FileBox>
                      <FileBtn>Choose file</FileBtn>
                      <FileName>No file chosen</FileName>
                    </FileBox>
                  </FormRow>
                  <Warn>Be careful: there is 50 points penalty for submission which fails the pretests or resubmission (except failure on the first test, denial of judgement or similar verdicts). "Passed pretests" submission verdict doesn't guarantee that the solution is absolutely correct and it will pass system tests.</Warn>
                  <SubmitBtn>Submit</SubmitBtn>
                </BoxBody>
              </Box>
            </Side>
          </Columns>
          <DockShade />
        </Page>
      </Window>
      <Dock>
        <DockIcons items={dockItems} />
        <DockSep $ml={16} $mr={15} />
        <DockIcons items={dockItems2} />
        <DockSep $ml={19} $mr={14} />
        <DockIcons items={dockItems3} />
      </Dock>
    </Screen>
  );
}
